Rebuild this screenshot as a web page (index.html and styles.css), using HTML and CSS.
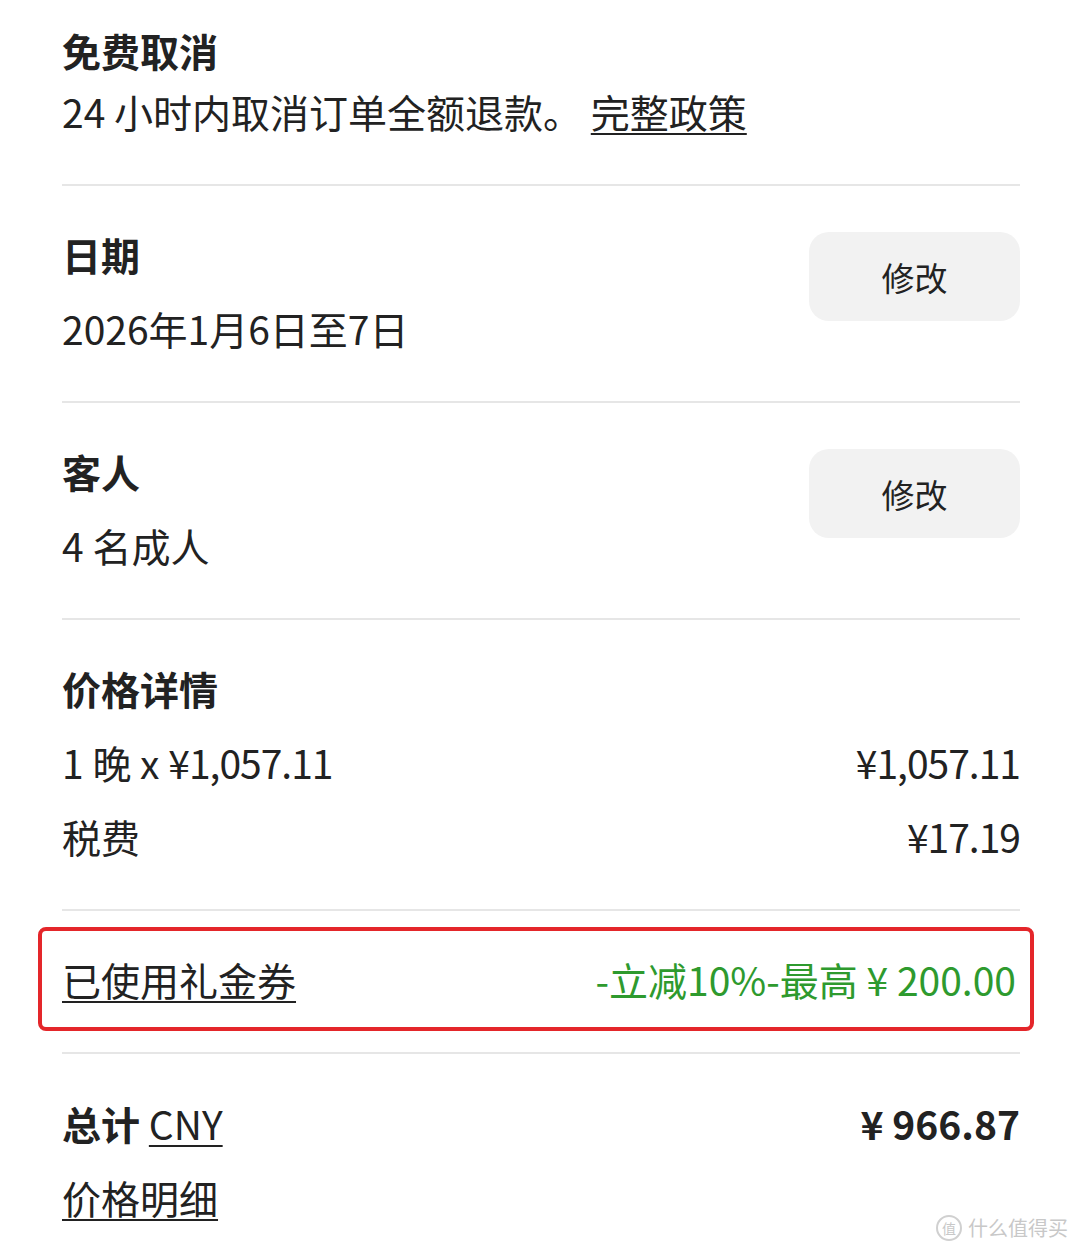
FILE: index.html
```html
<!DOCTYPE html>
<html lang="zh-CN">
<head>
    <meta charset="UTF-8">
    <meta name="viewport" content="width=device-width, initial-scale=1.0">
    <title>预订详情</title>
    <link rel="stylesheet" href="styles.css">
</head>
<body>
    <div id="container">
        <div class="section first">
            <div class="title">免费取消</div>
            <div class="text">24 小时内取消订单全额退款。 <a href="#" class="link">完整政策</a></div>
        </div>

        <div class="section row">
            <div>
                <div class="title">日期</div>
                <div class="text gap">2026年1月6日至7日</div>
            </div>
            <button type="button" class="edit-button">修改</button>
        </div>

        <div class="section row">
            <div>
                <div class="title">客人</div>
                <div class="text gap">4 名成人</div>
            </div>
            <button type="button" class="edit-button">修改</button>
        </div>

        <div class="section">
            <div class="title">价格详情</div>
            <div class="price-line gap">
                <span>1 晚 x <span class="num">¥1,057.11</span></span>
                <span class="num">¥1,057.11</span>
            </div>
            <div class="price-line gap">
                <span>税费</span>
                <span class="num">¥17.19</span>
            </div>
        </div>

        <div class="coupon">
            <a href="#" class="link">已使用礼金券</a>
            <span class="discount">-立减10%-最高 ¥ 200.00</span>
        </div>

        <div class="section last">
            <div class="price-line total">
                <span>总计 <a href="#" class="link">CNY</a></span>
                <span>¥ 966.87</span>
            </div>
            <div class="text gap"><a href="#" class="link">价格明细</a></div>
        </div>
    </div>

    <div class="watermark"><span class="mark-icon">值</span>什么值得买</div>
</body>
</html>
```

FILE: styles.css
```css
body {
    font-family: "Noto Sans CJK SC", "Noto Sans", sans-serif;
    background-color: #fff;
    color: #222;
    margin: 0;
    padding: 0;
    height: 1252px;
    overflow: hidden;
    position: relative;
}
#container {
    margin-left: 62px;
    width: 958px;
}
.section {
    padding: 43px 0 48px;
    border-bottom: 2px solid #e6e6e6;
}
.section.first {
    padding-top: 25px;
}
.section.last {
    border-bottom: none;
    border-top: 2px solid #e6e6e6;
    padding-top: 44px;
}
.row {
    display: flex;
    justify-content: space-between;
    align-items: flex-start;
}
.title {
    font-size: 39px;
    font-weight: 700;
    line-height: 50px;
}
.text {
    font-size: 39px;
    line-height: 50px;
    margin-top: 11px;
}
.gap {
    margin-top: 24px;
}
.link {
    color: #222;
    text-decoration: underline;
    text-decoration-thickness: 2px;
    text-underline-offset: 5px;
}
.edit-button {
    width: 211px;
    height: 89px;
    margin-top: 3px;
    background-color: #f2f2f2;
    color: #222;
    border: none;
    border-radius: 20px;
    font-family: inherit;
    font-size: 33px;
    cursor: pointer;
}
.price-line {
    display: flex;
    justify-content: space-between;
    font-size: 39px;
    line-height: 50px;
}
.num {
    letter-spacing: -1px;
}
.total {
    font-weight: 700;
}
.total .link {
    font-weight: 400;
}
.coupon {
    display: flex;
    justify-content: space-between;
    align-items: center;
    margin: 16px -14px 21px -24px;
    padding: 23px 14px 23px 20px;
    border: 4px solid #e4262a;
    border-radius: 8px;
    font-size: 39px;
    line-height: 50px;
}
.discount {
    color: #2e9a2e;
}
.watermark {
    position: absolute;
    right: 12px;
    bottom: 10px;
    display: flex;
    align-items: center;
    gap: 6px;
    color: #c8c8c8;
    font-size: 20px;
}
.mark-icon {
    display: inline-flex;
    justify-content: center;
    align-items: center;
    width: 22px;
    height: 22px;
    border: 2px solid #d0d0d0;
    border-radius: 50%;
    font-size: 14px;
}
```
